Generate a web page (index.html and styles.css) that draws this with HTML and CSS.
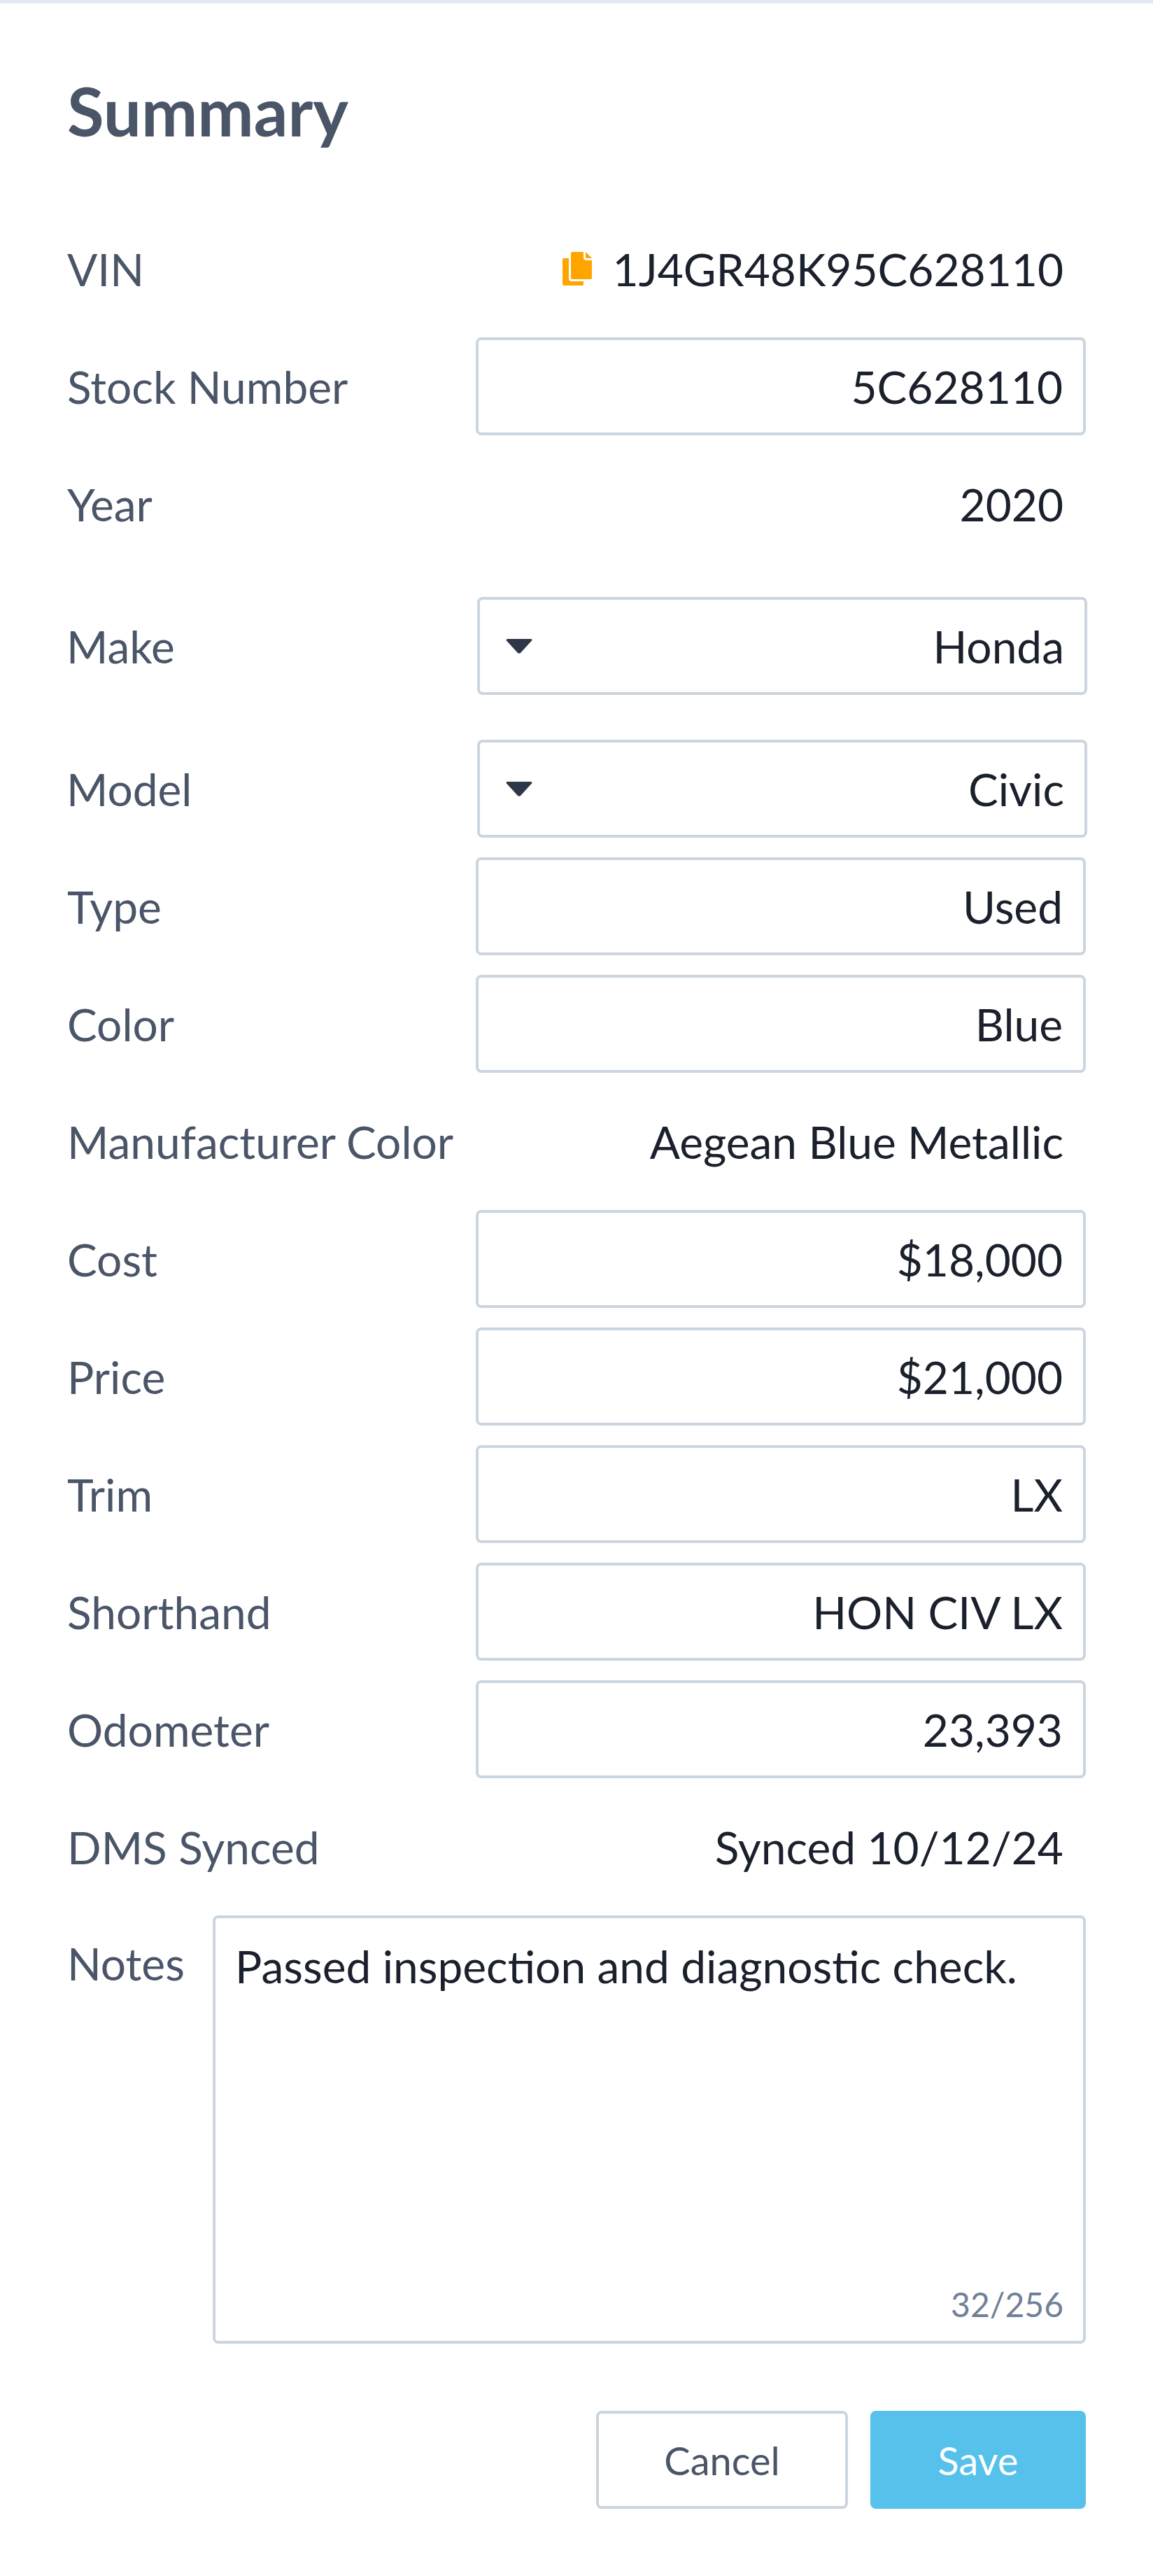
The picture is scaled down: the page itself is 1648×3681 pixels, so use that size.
FILE: index.html
```html
<!DOCTYPE html>
<html lang="en">
<head>
<meta charset="utf-8">
<title>Summary</title>
<link rel="stylesheet" href="styles.css">
</head>
<body>
<main class="panel">
  <h2 class="title">Summary</h2>
  <div class="fields">
    <div class="row">
      <span class="label">VIN</span>
      <span class="value vin">
        <svg class="copy" viewBox="0 0 42 48" aria-hidden="true"><path d="M2 9H9V38Q9 42 13 42H30V46Q30 48 28 48H2Q0 48 0 46V11Q0 9 2 9z"/><path d="M14 0H30V8Q30 12 34 12H42V37Q42 39 40 39H14Q12 39 12 37V2Q12 0 14 0z"/><path d="M33 0L42 9H35Q33 9 33 7z"/></svg>
        1J4GR48K95C628110
      </span>
    </div>
    <div class="row"><label class="label">Stock Number</label><input class="box" value="5C628110"></div>
    <div class="row"><span class="label">Year</span><span class="value">2020</span></div>
    <div class="row row-select row-make">
      <span class="label">Make</span>
      <div class="box select"><svg class="caret" viewBox="0 0 38 21" aria-hidden="true"><path d="M3 0H35Q38.500 0 37 2.500L21 20Q19 21.500 17 20L1 2.500Q-.5 0 3 0z"/></svg><span>Honda</span></div>
    </div>
    <div class="row row-select row-model">
      <span class="label">Model</span>
      <div class="box select"><svg class="caret" viewBox="0 0 38 21" aria-hidden="true"><path d="M3 0H35Q38.500 0 37 2.500L21 20Q19 21.500 17 20L1 2.500Q-.5 0 3 0z"/></svg><span>Civic</span></div>
    </div>
    <div class="row"><label class="label">Type</label><input class="box" value="Used"></div>
    <div class="row"><label class="label">Color</label><input class="box" value="Blue"></div>
    <div class="row"><span class="label">Manufacturer Color</span><span class="value">Aegean Blue Metallic</span></div>
    <div class="row"><label class="label">Cost</label><input class="box" value="$18,000"></div>
    <div class="row"><label class="label">Price</label><input class="box" value="$21,000"></div>
    <div class="row"><label class="label">Trim</label><input class="box" value="LX"></div>
    <div class="row"><label class="label">Shorthand</label><input class="box" value="HON CIV LX"></div>
    <div class="row"><label class="label">Odometer</label><input class="box" value="23,393"></div>
    <div class="row"><span class="label">DMS Synced</span><span class="value">Synced 10/12/24</span></div>
    <div class="row row-notes">
      <label class="label">Notes</label>
      <div class="notes">
        <textarea class="notes-input">Passed inspection and diagnostic check.</textarea>
        <span class="counter">32/256</span>
      </div>
    </div>
  </div>
  <div class="actions">
    <button class="btn btn-cancel" type="button">Cancel</button>
    <button class="btn btn-save" type="button">Save</button>
  </div>
</main>
</body>
</html>
```
FILE: styles.css
```css
* { box-sizing: border-box; }
html, body { margin: 0; padding: 0; background: #fff; }
body { font-family: "Lato", "Liberation Sans", sans-serif; color: #1a202c; }
.panel { height: 3681px; border-top: 5px solid #e2e8f0; padding: 0 96px; }
.title { margin: 0; padding-top: 85px; font-size: 96px; line-height: 136px; font-weight: 700; color: #4a5568; }
.fields { margin-top: 88px; }
.row { display: flex; align-items: center; justify-content: space-between; height: 140px; margin-bottom: 28px; font-size: 64px; }
.label { color: #4a5568; white-space: nowrap; }
.value { color: #1a202c; padding-right: 32px; white-space: nowrap; display: flex; align-items: center; }
.box { width: 872px; height: 140px; border: 4px solid #cbd5e0; border-radius: 8px; background: #fff; padding: 0 29px; font: inherit; color: #1a202c; text-align: right; outline: none; }
.select { display: flex; align-items: center; justify-content: space-between; margin-right: -2px; }
.caret { width: 38px; height: 21px; fill: #2d3748; margin-left: 8px; margin-top: 1px; }
.row-make { margin-top: 63px; margin-bottom: 64px; }
.row-select .label { margin-left: -1px; }
.copy { width: 42px; height: 48px; fill: #ffa500; margin-right: 30px; }
.row-notes { height: 612px; align-items: flex-start; margin-bottom: 96px; }
.row-notes .label { padding-top: 30px; }
.notes { position: relative; width: 1248px; height: 612px; }
.notes-input { display: block; width: 100%; height: 100%; border: 4px solid #cbd5e0; border-radius: 8px; padding: 30px 28px; font: inherit; color: #1a202c; resize: none; outline: none; }
.counter { position: absolute; right: 32px; bottom: 28px; font-size: 48px; color: #718096; }
.actions { display: flex; justify-content: flex-end; gap: 32px; }
.btn { height: 140px; font: inherit; font-size: 56px; border-radius: 8px; }
.btn-cancel { width: 360px; background: #fff; border: 4px solid #cbd5e0; color: #4a5568; }
.btn-save { width: 308px; background: #56c1ea; border: 0; color: #fff; }
```
